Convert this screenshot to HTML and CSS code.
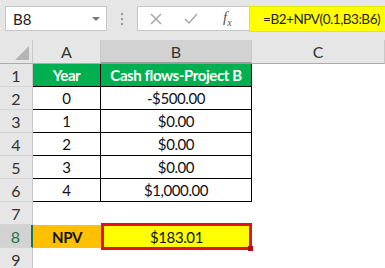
FILE: index.html
```html
<!DOCTYPE html>
<html lang="en">
<head>
    <meta charset="UTF-8">
    <title>NPV</title>
    <link rel="stylesheet" href="styles.css">
</head>
<body>
    <div class="formula-bar">
        <div class="name-box">
            <span>B8</span>
            <span class="caret"></span>
        </div>
        <div class="dots">
            <svg width="4" height="14" viewBox="0 0 4 14"><circle cx="2" cy="2" r="1.2" fill="#9a9a9a"/><circle cx="2" cy="7" r="1.2" fill="#9a9a9a"/><circle cx="2" cy="12" r="1.2" fill="#9a9a9a"/></svg>
        </div>
        <div class="fx-box">
            <svg class="icon" width="12" height="12" viewBox="0 0 12 12"><path d="M1 1 L11 11 M11 1 L1 11" stroke="#a6a6a6" stroke-width="1.5"/></svg>
            <svg class="icon" width="14" height="12" viewBox="0 0 14 12"><path d="M1 6 L5 10 L13 1" stroke="#a6a6a6" stroke-width="1.5" fill="none"/></svg>
            <span class="fx">f<sub>x</sub></span>
        </div>
        <div class="formula">=B2+NPV(0.1,B3:B6)</div>
    </div>

    <div class="sheet">
        <div class="corner"><span class="tri"></span></div>
        <div class="col-head">A</div>
        <div class="col-head sel">B</div>
        <div class="col-head">C</div>

        <div class="row-head">1</div>
        <div class="cell head bl">Year</div>
        <div class="cell head bl">Cash flows-Project B</div>
        <div class="cell"></div>

        <div class="row-head">2</div>
        <div class="cell bl">0</div>
        <div class="cell bl">-$500.00</div>
        <div class="cell"></div>

        <div class="row-head">3</div>
        <div class="cell bl">1</div>
        <div class="cell bl">$0.00</div>
        <div class="cell"></div>

        <div class="row-head">4</div>
        <div class="cell bl">2</div>
        <div class="cell bl">$0.00</div>
        <div class="cell"></div>

        <div class="row-head">5</div>
        <div class="cell bl">3</div>
        <div class="cell bl">$0.00</div>
        <div class="cell"></div>

        <div class="row-head">6</div>
        <div class="cell bl">4</div>
        <div class="cell bl">$1,000.00</div>
        <div class="cell"></div>

        <div class="row-head">7</div>
        <div class="cell"></div>
        <div class="cell"></div>
        <div class="cell"></div>

        <div class="row-head sel">8</div>
        <div class="cell npv-label">NPV</div>
        <div class="cell npv-value">$183.01<span class="handle"></span></div>
        <div class="cell"></div>

        <div class="row-head">9</div>
        <div class="cell"></div>
        <div class="cell"></div>
        <div class="cell"></div>
    </div>
</body>
</html>
```

FILE: styles.css
```css
body {
    margin: 0;
    background: #fff;
    font-family: Lato, "Liberation Sans", sans-serif;
    overflow: hidden;
}
.formula-bar {
    height: 40px;
    background: #e6e6e6;
    display: flex;
    align-items: flex-start;
    padding-top: 6px;
    box-sizing: border-box;
    white-space: nowrap;
    overflow: hidden;
}
.name-box {
    flex-shrink: 0;
    margin-left: 5px;
    width: 102px;
    height: 25px;
    box-sizing: border-box;
    background: #fff;
    border: 1px solid #c6c6c6;
    display: flex;
    align-items: center;
    justify-content: space-between;
    padding: 0 6px 0 7px;
    font-size: 15px;
    color: #222;
}
.caret {
    width: 0;
    height: 0;
    border-left: 4px solid transparent;
    border-right: 4px solid transparent;
    border-top: 4px solid #777;
}
.dots {
    flex-shrink: 0;
    width: 30px;
    height: 25px;
    display: flex;
    align-items: center;
    justify-content: center;
}
.fx-box {
    flex-shrink: 0;
    width: 112px;
    height: 25px;
    box-sizing: border-box;
    background: #fff;
    border: 1px solid #c6c6c6;
    border-right: none;
    display: flex;
    align-items: center;
    padding-left: 12px;
    gap: 22px;
}
.fx {
    font-family: "Liberation Serif", serif;
    font-style: italic;
    font-size: 15px;
    color: #555;
    margin-left: 3px;
}
.fx sub {
    font-size: 10px;
}
.formula {
    flex: 1;
    min-width: 0;
    height: 26px;
    box-sizing: border-box;
    background: #ffff00;
    border: 1px solid #e8e800;
    border-right: none;
    font-size: 13.5px;
    letter-spacing: -0.45px;
    color: #222;
    padding-left: 13px;
    line-height: 24px;
    overflow: hidden;
}
.sheet {
    display: grid;
    grid-template-columns: 33px 68px 151px 1fr;
    grid-template-rows: 24px repeat(9, 23px);
    font-size: 16px;
    color: #111;
    white-space: nowrap;
}
.corner {
    background: #e6e6e6;
    border-right: 1px solid #c8c8c8;
    border-bottom: 1px solid #ababab;
    position: relative;
}
.tri {
    position: absolute;
    right: 3px;
    bottom: 3px;
    width: 0;
    height: 0;
    border-left: 14px solid transparent;
    border-bottom: 14px solid #b4b4b4;
}
.col-head {
    background: #e6e6e6;
    border-right: 1px solid #c8c8c8;
    border-bottom: 1px solid #ababab;
    display: flex;
    align-items: center;
    justify-content: center;
    color: #333;
}
.col-head.sel {
    background: #d2d2d2;
    border-bottom: 2px solid #9c9c9c;
}
.row-head {
    background: #e6e6e6;
    border-right: 1px solid #c8c8c8;
    border-bottom: 1px solid #d4d4d4;
    display: flex;
    align-items: center;
    justify-content: center;
    color: #333;
}
.row-head.sel {
    background: #d2d2d2;
    color: #217346;
    border-right: 2px solid #217346;
}
.cell {
    display: flex;
    align-items: center;
    justify-content: center;
    box-sizing: border-box;
    font-size: 15px;
    letter-spacing: -0.4px;
}
.bl {
    border-right: 1px solid #000;
    border-bottom: 1px solid #000;
}
.head {
    background: #00b050;
    color: #fff;
    font-weight: bold;
}
.npv-label {
    background: #ffc000;
    font-weight: bold;
}
.npv-value {
    background: #ffff00;
    border: 3px solid #e81010;
    margin: -2px 0 -2px 0;
    position: relative;
}
.handle {
    position: absolute;
    right: -4px;
    bottom: -4px;
    width: 5px;
    height: 5px;
    background: #b01010;
}
```
